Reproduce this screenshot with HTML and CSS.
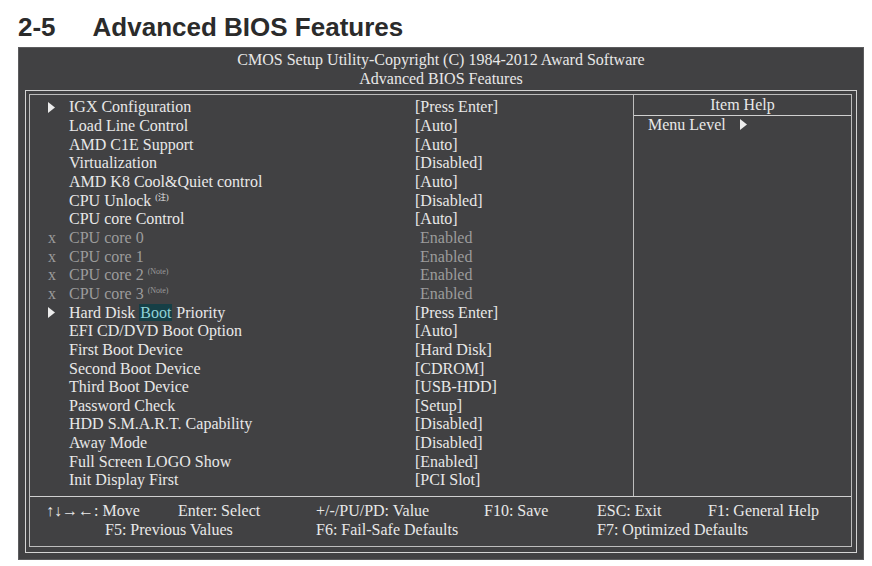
FILE: index.html
```html
<!DOCTYPE html>
<html lang="en">
<head>
    <meta charset="UTF-8">
    <title>Advanced BIOS Features</title>
    <link rel="stylesheet" href="styles.css">
</head>
<body>
    <h1 class="titulo"><span class="num">2-5</span>Advanced BIOS Features</h1>

    <div class="bios">
        <div class="cabecalho">
            <div>CMOS Setup Utility-Copyright (C) 1984-2012 Award Software</div>
            <div>Advanced BIOS Features</div>
        </div>

        <div class="moldura">
            <div class="interno">
                <div class="principal">
                    <div class="itens">
                        <div class="item"><span class="marca"><svg width="7" height="11" viewBox="0 0 7 11"><polygon points="0,0 7,5.5 0,11" fill="#ececec"/></svg></span><span>IGX Configuration</span><span>[Press Enter]</span></div>
                        <div class="item"><span class="marca"></span><span>Load Line Control</span><span>[Auto]</span></div>
                        <div class="item"><span class="marca"></span><span>AMD C1E Support</span><span>[Auto]</span></div>
                        <div class="item"><span class="marca"></span><span>Virtualization</span><span>[Disabled]</span></div>
                        <div class="item"><span class="marca"></span><span>AMD K8 Cool&amp;Quiet control</span><span>[Auto]</span></div>
                        <div class="item"><span class="marca"></span><span>CPU Unlock <sup class="nota">(注)</sup></span><span>[Disabled]</span></div>
                        <div class="item"><span class="marca"></span><span>CPU core Control</span><span>[Auto]</span></div>
                        <div class="item inativo"><span class="marca">x</span><span>CPU core 0</span><span class="valor">Enabled</span></div>
                        <div class="item inativo"><span class="marca">x</span><span>CPU core 1</span><span class="valor">Enabled</span></div>
                        <div class="item inativo"><span class="marca">x</span><span>CPU core 2 <sup class="nota">(Note)</sup></span><span class="valor">Enabled</span></div>
                        <div class="item inativo"><span class="marca">x</span><span>CPU core 3 <sup class="nota">(Note)</sup></span><span class="valor">Enabled</span></div>
                        <div class="item"><span class="marca"><svg width="7" height="11" viewBox="0 0 7 11"><polygon points="0,0 7,5.5 0,11" fill="#ececec"/></svg></span><span>Hard Disk <span class="destaque">Boot</span> Priority</span><span>[Press Enter]</span></div>
                        <div class="item"><span class="marca"></span><span>EFI CD/DVD Boot Option</span><span>[Auto]</span></div>
                        <div class="item"><span class="marca"></span><span>First Boot Device</span><span>[Hard Disk]</span></div>
                        <div class="item"><span class="marca"></span><span>Second Boot Device</span><span>[CDROM]</span></div>
                        <div class="item"><span class="marca"></span><span>Third Boot Device</span><span>[USB-HDD]</span></div>
                        <div class="item"><span class="marca"></span><span>Password Check</span><span>[Setup]</span></div>
                        <div class="item"><span class="marca"></span><span>HDD S.M.A.R.T. Capability</span><span>[Disabled]</span></div>
                        <div class="item"><span class="marca"></span><span>Away Mode</span><span>[Disabled]</span></div>
                        <div class="item"><span class="marca"></span><span>Full Screen LOGO Show</span><span>[Enabled]</span></div>
                        <div class="item"><span class="marca"></span><span>Init Display First</span><span>[PCI Slot]</span></div>
                    </div>

                    <div class="ajuda">
                        <div class="ajuda-titulo">Item Help</div>
                        <div class="ajuda-nivel">Menu Level <svg width="7" height="11" viewBox="0 0 7 11"><polygon points="0,0 7,5.5 0,11" fill="#ececec"/></svg></div>
                    </div>
                </div>

                <div class="rodape">
                    <span>↑↓→←: Move</span>
                    <span>Enter: Select</span>
                    <span>+/-/PU/PD: Value</span>
                    <span>F10: Save</span>
                    <span>ESC: Exit</span>
                    <span>F1: General Help</span>
                    <span class="f5">F5: Previous Values</span>
                    <span class="f6">F6: Fail-Safe Defaults</span>
                    <span class="f7">F7: Optimized Defaults</span>
                </div>
            </div>
        </div>
    </div>
</body>
</html>
```

FILE: styles.css
```css
body {
    margin: 0;
    background-color: #fff;
    font-family: "Liberation Serif", "Times New Roman", "Noto Sans CJK SC", serif;
}

.titulo {
    margin: 0;
    padding: 12px 18px 0;
    font-family: "Liberation Sans", Arial, sans-serif;
    font-weight: bold;
    font-size: 26px;
    line-height: 30px;
    color: #2b2b2b;
}

.titulo .num {
    margin-right: 37px;
}

.bios {
    margin: 5px 0 0 18px;
    width: 846px;
    box-sizing: border-box;
    background-color: #414143;
    border: 1px solid #5c5c5e;
    padding: 0 6px 6px 6px;
    color: #e8e8e8;
    font-size: 16px;
    line-height: 18.65px;
}

.cabecalho {
    text-align: center;
    padding: 3px 0 2px;
}

.moldura {
    border: 1px solid #d4d4d4;
    padding: 3px 4px 5px 3px;
}

.interno {
    border: 1px solid #bdbdbd;
}

.principal {
    display: flex;
}

.itens {
    width: 603px;
    padding: 3px 0 6px 18px;
    box-sizing: border-box;
}

.item {
    display: grid;
    grid-template-columns: 21px 346px 1fr;
    white-space: nowrap;
}

.marca {
    display: flex;
    align-items: center;
}

.item.inativo {
    color: #9c9c9c;
}

.item .valor {
    padding-left: 5px;
}

.nota {
    font-size: 8px;
    vertical-align: 6px;
    line-height: 0;
}

.destaque {
    background-color: #163f46;
    color: #8fd2d8;
    padding: 0 1px;
}

.ajuda {
    flex: 1;
    border-left: 1px solid #bdbdbd;
}

.ajuda-titulo {
    text-align: center;
    border-bottom: 1px solid #d0d0d0;
    padding-top: 1px;
}

.ajuda-nivel {
    padding-left: 14px;
}

.ajuda-nivel svg {
    margin-left: 10px;
}

.rodape {
    border-top: 1px solid #d0d0d0;
    display: grid;
    grid-template-columns: 132px 138px 168px 113px 111px 1fr;
    padding: 5px 0 7px 16px;
    white-space: nowrap;
}

.rodape .f5 {
    grid-column: 1 / 3;
    padding-left: 59px;
}

.rodape .f6 {
    grid-column: 3 / 5;
}

.rodape .f7 {
    grid-column: 5 / 7;
}
```
